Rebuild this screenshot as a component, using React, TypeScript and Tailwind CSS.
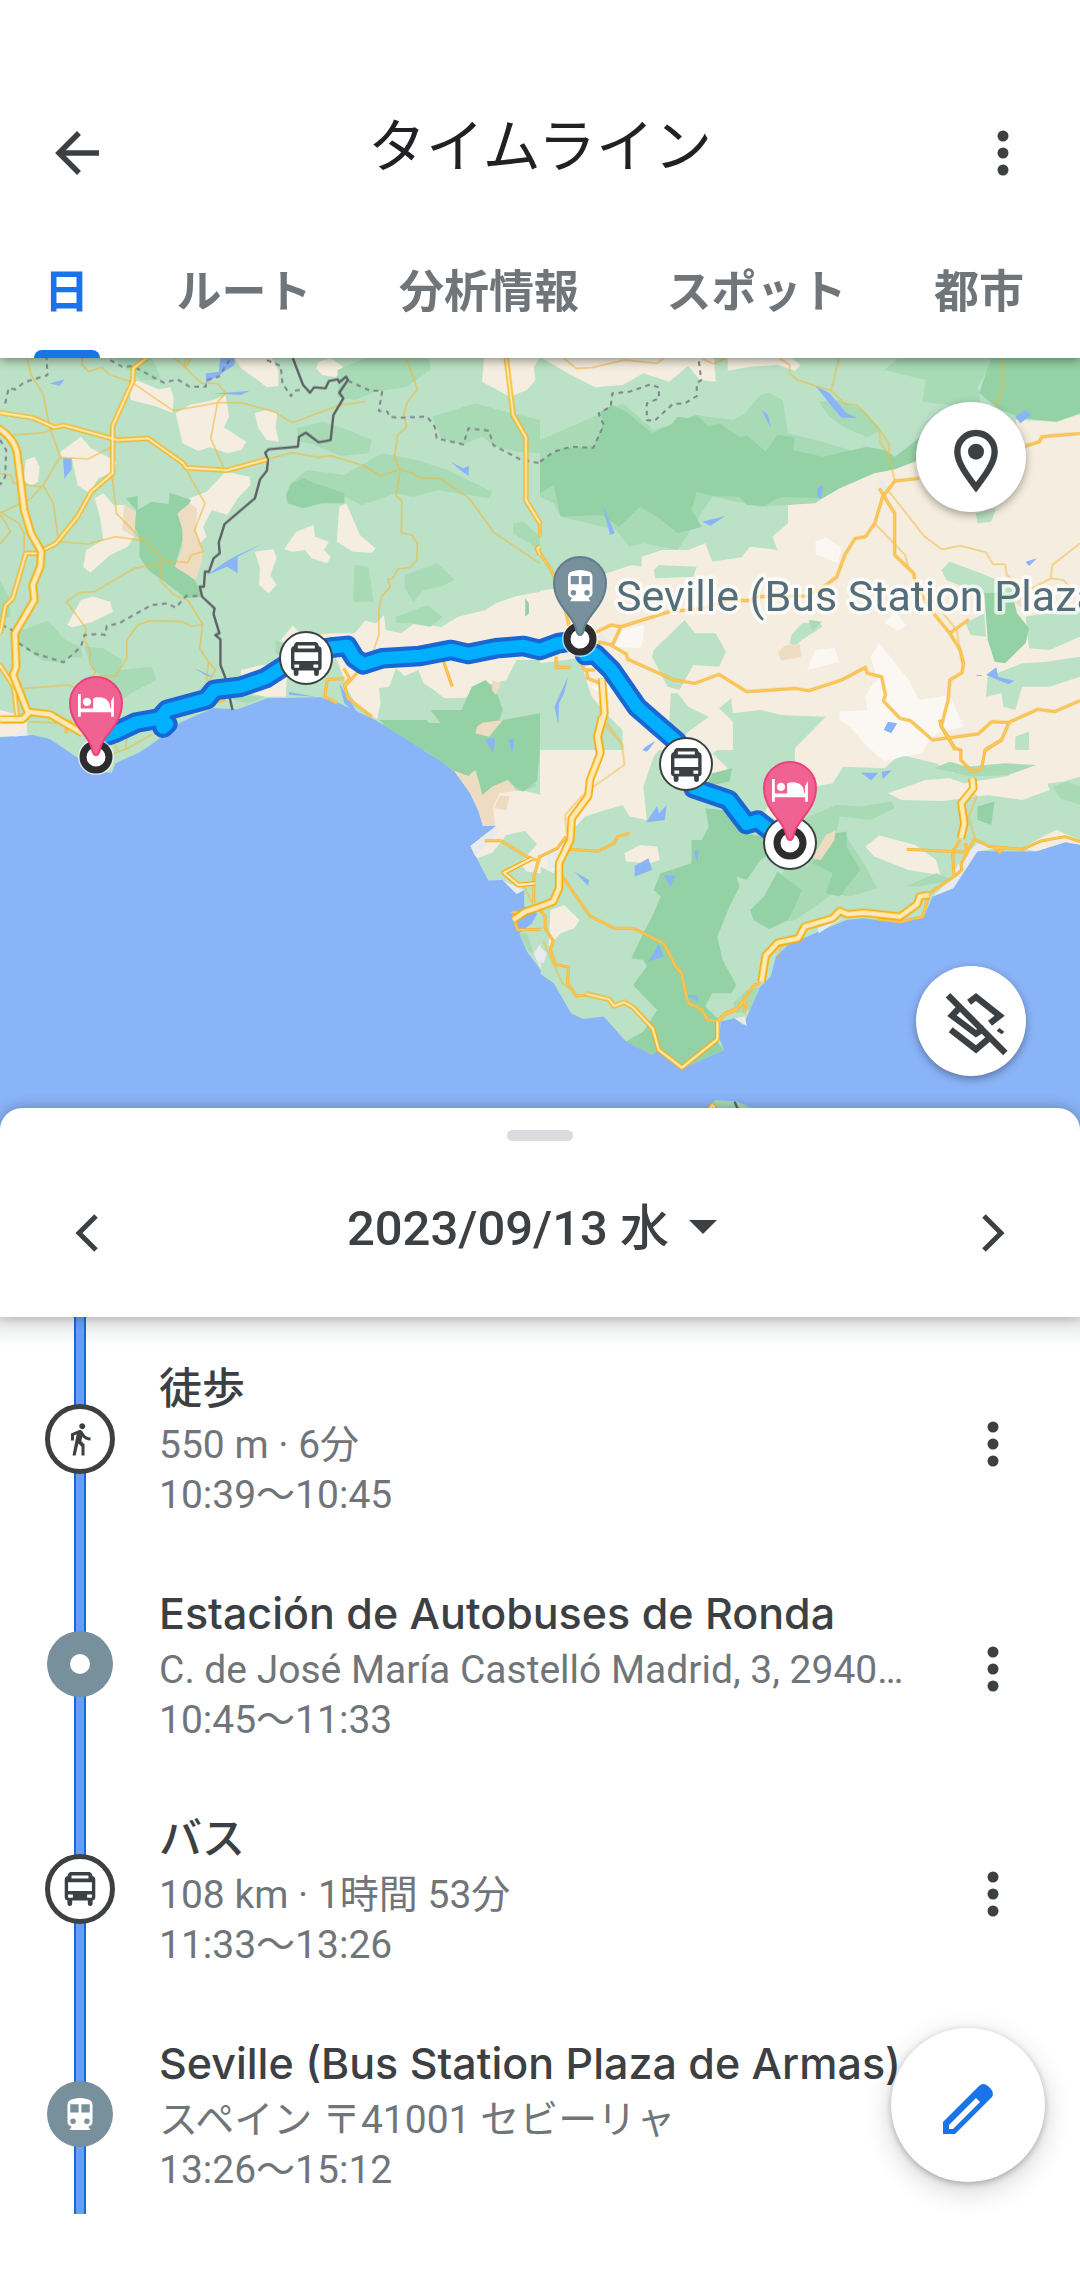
import React from 'react'
import { MdDirectionsWalk } from 'react-icons/md'

type Tiles = { tl?: string; tr?: string; bl?: string; br?: string }

const tileOrigin: Record<keyof Tiles, string> = {
  tl: 'translate(0 0)',
  tr: 'translate(1568 0)',
  bl: 'translate(0 1110)',
  br: 'translate(1568 1110)',
}

const sand: Tiles = {
  tl: 'M680 24H790L808 60V108L775 112 735 80 700 55ZM925 35L960 24 995 50 975 82 935 75 918 55ZM1405 24H1568L1550 50 1555 90 1530 120 1480 140 1440 118 1400 95ZM370 105L400 92 460 118 495 112 505 145 500 188 450 168 380 150ZM510 190L550 165 620 150 655 135 665 200 650 232 715 275 700 300 660 310 610 292 575 302 530 280ZM740 190L770 180 805 190 800 235 810 275 775 270 750 235ZM175 305L235 260 265 295 320 325 338 335 330 365 285 385 260 430 225 405 210 330 180 325ZM75 330L100 320 115 350 110 395 90 408 68 390ZM550 445L600 425 655 365 725 380 728 405 690 445 660 495 615 480 590 530 600 560 570 590ZM275 445L300 430 330 465 365 465 360 540 390 560 370 590 320 615 262 668 242 650 250 600 300 570 290 500ZM985 470L1005 460 1045 555 1090 595 1080 608 1025 605 978 575ZM825 598L860 545 910 525 915 560 955 575 940 600 960 620 950 640 905 625 885 600 850 605ZM740 605L795 598 803 625 785 675 803 705 780 730 752 705 755 655ZM195 825L235 750 270 740 320 755 328 785 270 815 210 832ZM0 1080L55 1095 78 1120V1160H0ZM700 960L760 945 840 940 830 1040 770 1040 700 1025ZM800 890L850 826 880 860 960 850 1030 850 1060 812 1092 820 1115 795 1120 840 1165 850 1210 815 1280 832 1330 800 1410 780 1440 760 1500 738 1570 725V930H1500L1470 990 1400 1010 1350 1043 1290 1045 1260 1020 1230 1000 1215 960 1175 978 1150 955 1130 1010 1100 1015 1105 1060 1095 1108 1040 1075 1010 1020 990 960 970 910 860 930Z',
  tr: 'M5 24H505L510 95 465 90 430 48 375 95 300 70 240 105 160 112 90 75ZM545 24H730L757 45 740 62 690 45 610 50 545 62ZM1570 192L1500 215 1380 210 1400 290 1100 330 1030 358 970 370 870 415 820 445 720 465V520L675 560 690 600 610 590 585 622 500 635 480 580 430 600 355 600 295 620V650L265 645 180 675 150 700 0 722V1200H1570Z',
  bl: 'M1320 155L1360 168 1380 150 1392 190 1400 225 1440 200 1475 180 1530 215 1570 225V385L1525 333 1470 345 1430 398 1384 415 1366 378 1440 318ZM1408 50L1450 15 1480 0 1520 0 1490 55ZM1510 430L1570 360V460L1530 455Z',
  br: 'M0 0H190L240 60 320 0 360 70 330 110 300 200 310 300 260 290 240 255 190 270 130 290 70 360 40 460 0 440ZM360 0H560L555 65 500 100 545 145 480 200 440 210 380 120ZM740 55L830 5 1568 0V170L1520 185 1400 200 1360 165 1280 150 1200 160 1150 130 1070 110 1050 100 1000 145 880 140 850 190 740 210ZM1010 220L1120 180 1190 175 1230 190 1380 165 1470 180 1480 210 1400 240 1300 225 1170 243 1050 240ZM810 300L840 290 858 310 840 340 810 380ZM945 380L985 347 1090 375 1150 420 1162 465 1070 450 970 410ZM1460 350L1500 330 1568 360V380L1445 395 1400 385ZM245 400L290 375 340 380 348 420 320 430 250 425ZM30 570L70 555 115 600 100 625 60 640 25 680ZM650 280L680 230 740 330Z',
}

const greenMid: Tiles = {
  tl: 'M330 24H440L470 90 410 90ZM980 60L1060 24H1245L1250 60 1180 110 1090 125 1030 150 980 140ZM860 235L940 215 1010 240 1080 270 1070 310 990 318 900 280 870 275ZM1255 200L1380 160 1450 180 1568 210V310L1500 305 1440 290 1400 260 1340 285 1280 265ZM850 395L890 360 1000 375 1110 310 1210 330 1300 360 1430 425 1420 445 1270 420 1200 440 1150 430 1050 465 1000 440ZM1030 645L1070 650 1085 755 1025 755ZM1175 675L1270 640 1320 690 1280 710 1230 720 1200 755 1175 715ZM1150 800L1240 765 1285 800 1250 830 1190 820 1150 820ZM40 850L140 812 190 870 235 890 240 925 200 920 180 940 120 930 85 900 45 880ZM245 890L300 895 355 930 350 960 440 950 455 990 380 1030 340 1060 330 1000 270 960ZM1490 520L1520 515 1568 560V600L1490 550ZM0 690L25 740 30 800 0 805ZM800 870L830 880V920L800 910ZM670 1035L770 1040 720 1060 680 1050Z',
  tr: 'M0 270L180 190 240 160 330 240 455 195 560 210 590 195 640 135 665 128 705 150 720 250 800 270 900 300 1000 300 1010 360 900 380 800 460 640 470 500 440 400 600 300 580 260 590 220 540 60 500 40 460 0 440ZM810 155L870 150 940 180 990 240 950 262 880 230 840 200ZM1000 60L1040 24H1320L1270 110 1280 160 1230 170 1110 155 1120 90ZM780 810L820 815 790 840Z',
  bl: 'M1340 30L1370 0H1568V110L1555 200 1520 215 1440 200 1400 225 1300 130 1200 30ZM1507 640L1530 640 1550 700 1535 695Z',
  br: 'M760 300L860 255 930 260 1020 245 1030 265 960 300 870 290 860 340 890 350 940 430 980 505 900 530 850 520 800 560 740 600 680 610 620 580 720 440 780 440ZM1060 500L1150 460 1200 480 1100 500ZM1145 145L1190 125 1240 140 1350 130 1440 135 1360 165 1250 170ZM1490 200L1530 185 1568 200V255L1510 235ZM560 850L600 810 640 800 610 870 570 880Z',
}

const greenDark: Tiles = {
  tl: 'M365 445L400 438V480L440 455 490 462 492 428 555 450 530 500 530 570 510 640 565 690 590 740 540 745 470 690 430 660 405 620 405 560 390 530 395 480ZM845 400L880 385 915 400 1000 430 1000 460 935 460 880 475 835 460 830 435ZM1370 1010L1410 990 1440 1020 1460 1080 1450 1110 1390 1120 1370 1165 1410 1180 1400 1200H1220L1100 1140 1120 1110 1180 1115 1280 1120 1250 1080 1340 1080ZM1525 745L1536 760V790L1525 800Z',
  tr: 'M0 335L60 295 155 290 185 220 175 185 210 165 250 185 325 250 380 225 400 200 430 205 455 195 490 230 520 220 580 262 600 255 655 305 690 255 740 262 735 300 820 320 950 290 1000 300 1030 320 1100 265V330L1030 358 970 370 870 415 820 445 700 440 650 468 600 465 580 440 500 438 455 425 440 480 470 530 400 550 340 500 290 470 230 530 180 495 60 500 40 405 0 430ZM1310 24H1568V190L1500 215 1400 205 1330 175 1275 130ZM1290 730L1370 725 1385 790 1420 835 1410 880 1350 940 1320 935 1300 870Z',
  bl: 'M1100 0H1240L1260 40 1320 20 1400 0 1460 0 1568 -20V60L1560 180 1520 215 1470 180 1400 225 1380 150 1360 168 1320 155 1275 120Z',
  br: 'M480 265L530 270 590 340 650 350 700 380 640 420 600 480 570 470 580 500 550 560 515 650 530 720 570 795 555 820 500 820 480 860 520 900 510 960 535 990 410 1047 345 990 325 1005 250 965 300 935 340 870 270 795 310 740 300 720 265 715 300 640 330 580 350 530 330 510 350 460 440 430 440 360 470 360 490 320ZM610 570L650 530 690 455 720 480 760 510 740 560 720 600 665 628 620 600ZM860 340L890 335 890 380 930 450 900 490 870 530 830 520 850 460 790 430ZM1270 260L1320 245 1310 315 1270 300ZM500 160L558 145 550 185 480 200Z',
}

const greenOnSand: Tiles = {
  tl: 'M835 940L960 930 1000 985 990 1045 940 1035 890 1035 830 1040Z',
  tr: 'M0 940L110 925 125 960 150 1040 200 1100 240 1140 240 1200H0ZM330 900L420 810 450 850 510 850 540 905 520 950 445 945 405 1020 370 1010 325 920ZM380 1030H400L430 1070 490 1100 425 1150 400 1200H370ZM520 1075L555 1045 560 1090 640 1080 700 1095 830 1100 740 1195V1200H560V1115ZM330 660L345 645 455 650 445 680 335 685ZM730 855L760 820 810 815 820 830 760 870 740 890 725 880ZM1265 490L1325 475 1310 515 1270 520ZM1165 660L1190 635 1280 670 1350 700 1390 730 1370 760 1250 720 1180 690ZM1235 820L1290 790 1295 860 1250 855ZM1410 800L1568 770V860L1480 900 1420 895ZM1300 980L1400 940 1470 935 1568 920V980L1480 1010 1400 1010 1380 1080 1345 1070 1340 1030 1295 1040ZM1380 1160L1420 1145V1200H1380Z',
}

const pale: Tiles = {
  tr: 'M800 575L830 562 875 595 865 640 800 612ZM215 890L240 840 300 825 300 870 290 895ZM1000 820L1030 780 1062 825 1040 842ZM775 960L800 900 855 893 868 935ZM870 1085L950 1080 945 1040 960 1010 980 990 960 920 985 880 1070 990 1100 1050 1190 1035 1230 1130 1150 1150 1110 1200H960L900 1130 870 1110ZM150 1010L200 1000 240 1030 165 1025Z',
  br: 'M900 0H1230L1200 20 1140 30 1110 100 1050 110 1000 125 940 70Z',
}

const grey: Tiles = {
  tl: 'M40 1160L65 1135 85 1155Z',
  tr: 'M980 375L1015 415 995 430ZM170 845L200 870 175 880Z',
  bl: 'M1366 378L1440 318 1445 340 1380 410ZM1460 482L1522 510 1500 522ZM1550 700L1570 670V750Z',
  br: 'M0 680L20 700 10 730 0 725ZM20 390L60 400 50 440 20 450ZM565 895L595 890 600 918ZM1270 370L1320 385 1270 395 1200 505 1140 530 1190 480 1220 420ZM805 625L880 595 850 612 810 640Z',
}

const dune: Tiles = {
  tl: 'M360 465L395 485 390 558 355 540ZM515 490L550 460 572 475 570 540 590 600 585 640 568 690 508 650 530 590 530 540ZM1430 990L1455 1000 1440 1035 1428 1020ZM1385 1130L1400 1118 1460 1110 1420 1160 1380 1150Z',
  tr: 'M690 905L715 885 755 882 758 920 700 932ZM1375 755L1400 745V775Z',
  bl: 'M1320 152L1360 168 1380 150 1392 190 1400 225 1430 200 1475 180 1500 212 1450 220 1432 260 1437 318H1402L1390 275 1365 220ZM1450 228L1480 228 1470 272 1435 265Z',
  br: 'M830 345L858 332 855 360 815 420 790 415Z',
}

const water: Tiles = {
  tl: 'M145 100L188 88 172 108ZM598 70L635 66 640 24H682L680 45 630 80 598 100ZM615 130L660 128 725 122 700 135ZM183 325H208V358L187 386ZM1308 335L1345 355 1362 348 1360 378 1330 355ZM600 676L655 635 690 615 765 580 690 620 690 670 660 650ZM565 955L620 980 600 978ZM838 1025L915 1040 840 1035ZM985 1000L1045 1100 1000 1060ZM1408 1168L1438 1165 1432 1210ZM1477 1168H1493L1487 1210Z',
  tr: 'M800 108L840 128 890 190 922 203 875 203 840 160ZM642 178L662 195 670 233ZM182 465L217 550 203 555ZM470 515L538 498 495 527ZM805 415L822 405 815 450 805 435ZM1380 200L1410 180 1425 195 1395 220ZM1410 635L1443 625 1420 648ZM1295 975L1325 952 1330 980 1378 992 1360 1003ZM1010 1115L1037 1120 1020 1150 998 1140ZM82 978L70 1030 55 1060 53 1125 42 1070ZM300 1195L335 1172 315 1200ZM1268 975H1283V978H1268Z',
  br: 'M308 308L340 258 345 280 368 256 362 300ZM275 438L315 415 325 450 275 470ZM360 465L393 468 378 500ZM100 455L142 480 140 498ZM448 395L460 390 458 435ZM315 725L345 672 360 710ZM412 825L455 825 462 843ZM932 158L982 158 962 182ZM992 155L1022 150 995 178ZM296 90L333 65 310 95Z',
}

const sea: Tiles = {
  bl: 'M0 52L95 45 145 57 225 113 270 155 325 158 335 130 400 100 430 80 470 50 520 10 560 -10 620 -35 690 -32 775 -65 930 -68 985 -50 1090 0 1275 120 1320 155 1365 220 1390 275 1402 318H1440L1366 378 1418 482 1460 480 1500 522 1522 510V560L1560 580 1545 610 1507 640 1530 695 1570 750V1260H0Z',
  br: 'M-2 760L40 790 90 880 125 897 185 890 250 965 325 1005 345 990 410 1047 535 990 520 955 525 905 565 895 590 915 610 870 640 800 670 770 685 710 720 675 810 635 890 600 940 595 1050 610 1115 590 1140 530 1200 505 1270 393 1440 395 1525 367 1570 375V1260H-2Z',
}

const africa: Tiles = { br: 'M480 1170L510 1140 570 1145 640 1175Z' }

const minorRoads: Tiles = {
  tl: 'M78 24L90 75 125 130 145 235 175 320 125 405 90 445 0 490M40 255L125 248 155 235M175 322L255 327 325 290M238 24V45L258 65 295 52 320 75 380 95 503 182 632 158 700 158 795 185 848 218 985 165 1060 155M540 24L535 50 585 100 632 100 655 130 632 155 612 265 650 355M505 24L540 50 555 24M125 405L155 460 170 575 255 582 335 560 415 572M325 375L338 490 415 572 480 632 465 640 390 655 275 725 230 728 193 755 250 835 245 870 262 905 260 940 278 965 260 995M465 640V692L505 735 545 750 588 822 580 895 605 935 600 985 620 1020M540 358L595 460 565 540 590 605 555 615 545 638 480 632M588 825L555 828 530 815 435 812 400 825 368 870V925L335 978 280 978M605 935L625 960 600 1010M775 328L848 308 925 322 960 317 1060 348 1105 378 1160 358 1200 370 1215 382 1280 387 1362 445 1435 548 1568 640M1180 24L1212 118 1183 155 1172 195 1180 230 1155 255 1145 320 1162 360 1150 435 1167 455 1165 548 1195 555 1212 580 1210 630 1192 652 1155 657 1140 685 1125 688 1133 710 1108 740 1100 780V855L1085 900M0 370L30 375 40 400 120 410M0 485L55 520 70 550V605M0 582L30 545 15 515 0 495M70 1015L200 1005 225 1015M85 1115L200 1120M0 940L40 1000',
  tr: 'M68 24L105 55 150 53 245 30 340 40 360 24M470 24L503 42 540 24M695 24L725 45V70L748 90 845 122 885 160 920 165 985 238 988 278 1013 315 1030 392M868 24L845 122M985 238L1013 280V315M1340 24L1345 110 1320 170M1010 420L1115 558 1167 598 1220 587 1295 607 1315 643 1350 642 1355 675 1400 712 1430 715 1483 685 1520 690 1550 725M1483 685L1487 645 1568 580M972 520L1060 615 1070 655M1090 690L1210 840 1225 940M185 1120L240 1185V1200',
  bl: 'M330 100L365 88 445 42M370 30L365 88M330 70L345 98M1522 500L1545 550',
  br: 'M195 10L238 72 245 135 155 200 120 230 73 285 78 340M10 665L65 790 100 815M1250 220L1268 230 1245 290 1262 355M690 720L700 680 760 655',
}

const mainRoads: Tiles = {
  tl: 'M1288 935L1313 1010M1000 985L950 988 943 1040 978 1060M1000 1010L1040 965M998 955L1015 985 1000 1005 1010 1045 1080 1100M190 1150L205 1110M570 1050L600 1060 655 1050',
  tr: 'M0 610L30 655 60 720 85 830M0 515V560M160 848L205 825 235 830 375 785 470 775 550 750 605 752 630 740 780 738 830 705 862 680 885 615 915 565 945 560 972 520 995 440 1030 393 1100 385M1410 288L1450 275 1457 260 1568 250M985 415L1030 490V615L1085 670 1090 700 1135 780 1190 850 1245 808M1190 850L1220 900 1230 940 1225 968 1190 990 1185 1050 1165 1130 1187 1165 1205 1200M165 875L210 885 235 830M205 885L250 912 255 928 390 990 450 1000 520 973 600 1025 740 1015 780 1022 875 990 945 952 950 970 992 980 1003 1035 997 1053 1045 1105 1075 1112 1140 1170 1272 1152 1312 1115 1362 1117 1445 1078 1495 1085 1568 1052M1362 1117L1340 1170 1290 1200M47 920V952H88M120 940L130 960H160M135 960L138 985 175 1000',
  bl: 'M1408 362H1455L1530 410 1568 425M1568 405L1550 470V550M1485 577H1520M1495 605L1503 630 1570 628',
  br: 'M0 410L50 385 75 350M78 388L170 393 215 370 225 350 260 340M65 470L145 588 215 625 272 625 360 672 395 742 410 757 430 850 468 868 487 900 515 903 540 878 570 865 597 845M520 903L535 885 570 870 622 795 640 790M597 845L593 880M1065 388L1240 397 1262 357 1305 380 1400 388 1455 363 1525 350 1568 365M1220 360L1198 395 1202 470 1130 520 1112 590 1045 605 980 598M1235 370L1240 400 1222 430 1225 450 1202 470M1320 385L1345 385 1335 397ZM0 570L15 590V625L38 662 30 690 45 733 83 742 80 790 105 828 140 825M1160 0L1165 20 1187 55 1205 85 1222 90V120L1255 155 1282 145 1292 92 1340 60',
}

const highways: Tiles = {
  tl: 'M0 188L95 203 158 232 185 226 342 270 430 265 532 340 540 353 658 361 775 328M425 24L387 55 385 95 327 228V370L265 425 225 500 163 580 120 603M118 610H75L37 745 15 768 5 830 0 850M1470 24L1490 195 1527 262V450L1568 520M1568 590L1560 595 1568 615M0 945L40 1010 50 1100',
  bl: 'M1545 415L1463 458 1505 495 1553 490',
  br: 'M135 822L200 838 215 858 245 847 270 862 327 925 345 990 412 1043 515 958V905M490 1172L500 1155 512 1170',
}

const motorways: Tiles = {
  tl: 'M-10 232Q40 260 50 310L70 480 90 550 120 605 117 650 95 705 100 750 43 850 47 950 38 975 80 1085 145 1093 240 1150M0 1108H65L85 1088',
  tr: 'M180 985L187 1090 167 1160 175 1210',
  bl: 'M1490 600L1525 575 1568 560',
  br: 'M180 -10L167 50 175 100 145 180 140 228 92 295 88 360 55 430V505L38 545 0 560M643 785L655 707 690 668 750 655 768 620 850 595 870 573 893 583 940 578 1045 590 1095 553 1102 530 1130 525M1255 175L1258 205 1223 250 1232 310 1222 355',
}

const border: Tiles = {
  tl: 'M850 24L880 105 900 128 912 112 945 115 955 93 980 88 985 97 1005 80 1010 90 985 128 997 145 968 195 960 270 925 277 888 248 868 260 865 290 780 298 770 308 778 330 775 362 755 388 740 445 652 522 635 578 638 610 620 625 607 665H595L592 710H580L587 740 623 775 620 792 637 850 625 855 640 868V945L653 980 675 1080',
  br: 'M565 1145L575 1170',
}

const regions: Tiles = {
  tl: 'M15 160L25 115 45 118 70 97 138 75 135 24M320 30L355 50 385 48 475 98 515 88 550 110 597 110 600 90 635 80 670 24M775 30L815 48 820 100 845 138 855 122 880 118M1010 92L1075 122H1110L1100 183 1125 185 1130 200 1155 203 1240 200 1262 230 1268 265 1345 283 1360 235 1420 242 1432 285 1510 328 1568 340M0 270L18 300 15 380 0 405M5 825L35 840 40 870 100 910 185 937 235 890 245 855 290 852 305 855 310 828 345 820 440 765 485 760 510 773 540 738H580',
  tr: 'M0 335L40 305 90 290 155 293 185 225 170 190 205 170 210 130 260 125 320 103 345 112V145L310 160V210L332 213 385 162 420 160 455 138V100L468 90 460 24',
}

type Paint = { fill?: string; stroke?: string; width?: number; opacity?: number; dash?: string }

function Layer({ tiles, fill = 'none', stroke, width, opacity, dash }: Paint & { tiles: Tiles }) {
  return (
    <g
      fill={fill}
      stroke={stroke}
      strokeWidth={width}
      opacity={opacity}
      strokeDasharray={dash}
      strokeLinejoin="round"
    >
      {(Object.keys(tiles) as (keyof Tiles)[]).map((key) => (
        <path key={key} d={tiles[key]} transform={tileOrigin[key]} />
      ))}
    </g>
  )
}

const busPath =
  'M16 0H74Q80 3 82 12 90 14 90 22V76Q90 83 82 84V94Q82 100 75 100T68 94V84H22V94Q22 100 15 100T8 94V84Q0 83 0 76V22Q0 14 8 12 10 3 16 0ZM10 30V56H80V30ZM20 10V19H70V10ZM10 66V76H24V66ZM66 66V76H80V66Z'
const trainPath =
  'M20 2Q36 -2 52 2 72 4 72 20V68Q72 78 60 82L66 92H6L12 82Q0 78 0 68V20Q0 4 20 2ZM8 18V42H32V18ZM40 18V42H64V18ZM16 59A8 8 0 1 0 16 75 8 8 0 1 0 16 59ZM56 59A8 8 0 1 0 56 75 8 8 0 1 0 56 59Z'
const bedPath =
  'M0 0H8V42H96V20L104 6V66H96V53H8V66H0ZM44 42V13Q58 6 80 14 92 22 94 42ZM26 11A12 12 0 1 1 26 35 12 12 0 1 1 26 11Z'

const route =
  'M300 1160L330 1150 395 1118 460 1106 485 1122 473 1133 466 1103 485 1080 600 1048 622 1020 700 1010 770 985 890 905 960 893 1008 888 1030 925 1055 943 1110 925 1220 918 1310 900 1360 912 1440 895 1520 888 1568 900 1620 880 1685 870 1700 915 1728 912 1775 960 1850 1072 1965 1175 1990 1245 2015 1315 2115 1350 2168 1422 2200 1412 2240 1445'

function Stop({ x, y }: { x: number; y: number }) {
  return (
    <>
      <circle cx={x} cy={y} r="18" fill="#fff" opacity="0.6" />
      <circle cx={x} cy={y} r="13" fill="#fff" stroke="#2d2d2d" strokeWidth="7" />
    </>
  )
}

function Pin({ x, y, fill, stroke, children }: { x: number; y: number; fill: string; stroke: string; children: React.ReactNode }) {
  return (
    <g transform={`translate(${x} ${y})`}>
      <path
        d="M0 52Q-3 52 -4 46C-6 33 -26 22 -26 0A26 26 0 0 1 26 0C26 22 6 33 4 46Q3 52 0 52Z"
        fill={fill}
        stroke={stroke}
        strokeWidth="2"
      />
      {children}
    </g>
  )
}

function BusMarker({ x, y }: { x: number; y: number }) {
  return (
    <g transform={`translate(${x} ${y})`}>
      <circle r="26" fill="#fff" stroke="#3c4043" strokeWidth="2" />
      <path d={busPath} fill="#3c4043" transform="translate(-15 -16) scale(.34)" fillRule="evenodd" />
    </g>
  )
}

function TimelineMap() {
  return (
    <svg viewBox="0 0 1080 772" className="block h-auto w-full bg-[#bbe2c6]" role="img" aria-label="地図">
      <g transform="scale(.3444 .3333) translate(0 -24)">
        <Layer tiles={sand} fill="#f5eee0" />
        <Layer tiles={greenOnSand} fill="#bbe2c6" />
        <Layer tiles={greenMid} fill="#a8dab5" />
        <Layer tiles={greenDark} fill="#94d2a5" />
        <Layer tiles={pale} fill="#fbf8f3" />
        <Layer tiles={sea} fill="#8ab4f8" />
        <Layer tiles={grey} fill="#e8eaed" />
        <Layer tiles={dune} fill="#eedcc2" />
        <Layer tiles={water} fill="#8ab4f8" />
        <Layer tiles={africa} fill="#a8dab5" />
        <Layer tiles={minorRoads} stroke="#f2b83c" width={5} opacity={0.6} />
        <Layer tiles={regions} stroke="#80868b" width={6} dash="14 13" />
        <Layer tiles={border} stroke="#5f6368" width={7} />
        <Layer tiles={mainRoads} stroke="#f5b63b" width={9} />
        <Layer tiles={mainRoads} stroke="#fccb5c" width={4} />
        <Layer tiles={highways} stroke="#f9ab00" width={14} />
        <Layer tiles={highways} stroke="#ffeab5" width={7} />
        <Layer tiles={motorways} stroke="#f9ab00" width={24} />
        <Layer tiles={motorways} stroke="#ffeab5" width={14} />
        <g fill="none" strokeLinejoin="round" strokeLinecap="round">
          <path d={route} stroke="#1967d2" strokeWidth="62" />
          <path d={route} stroke="#00b0ff" strokeWidth="37" />
        </g>
      </g>

      <BusMarker x={306} y={300} />
      <BusMarker x={686} y={406} />
      <circle cx="790" cy="485" r="26" fill="#fff" stroke="#3c4043" strokeWidth="2" />
      <Stop x={96} y={399} />
      <Stop x={580} y={281} />
      <Stop x={790} y={485} />
      <Pin x={96} y={345} fill="#f06292" stroke="#ec407a">
        <path d={bedPath} fill="#fff" transform="translate(-18 -9) scale(.345)" />
      </Pin>
      <Pin x={790} y={430} fill="#f06292" stroke="#ec407a">
        <path d={bedPath} fill="#fff" transform="translate(-18 -9) scale(.345)" />
      </Pin>
      <Pin x={580} y={225} fill="#78909c" stroke="#607d8b">
        <path d={trainPath} fill="#fff" fillRule="evenodd" transform="translate(-12 -13) scale(.34)" />
      </Pin>
      <text
        x="616"
        y="253"
        className="text-[43px] [font-family:Roboto,sans-serif]"
        fill="#546e7a"
        stroke="#fff"
        strokeOpacity="0.7"
        strokeWidth="7"
        strokeLinejoin="round"
        paintOrder="stroke"
      >
        Seville (Bus Station Plaza de Armas)
      </text>
    </svg>
  )
}

function Dots() {
  return (
    <svg viewBox="0 0 12 46" className="h-[46px] w-3" fill="#3c4043" aria-hidden="true">
      <circle cx="6" cy="6" r="5.5" />
      <circle cx="6" cy="23" r="5.5" />
      <circle cx="6" cy="40" r="5.5" />
    </svg>
  )
}

const tabs = ['日', 'ルート', '分析情報', 'スポット', '都市']

const visits = [
  { kind: 'walk', title: '徒歩', detail: '550 m · 6分', time: '10:39～10:45' },
  {
    kind: 'place',
    title: 'Estación de Autobuses de Ronda',
    detail: 'C. de José María Castelló Madrid, 3, 29400 Ronda',
    time: '10:45～11:33',
  },
  { kind: 'bus', title: 'バス', detail: '108 km · 1時間 53分', time: '11:33～13:26' },
  {
    kind: 'train',
    title: 'Seville (Bus Station Plaza de Armas)',
    detail: 'スペイン 〒41001 セビーリャ',
    time: '13:26～15:12',
  },
]

function VisitIcon({ kind }: { kind: string }) {
  if (kind === 'walk' || kind === 'bus') {
    return (
      <span className="flex size-[70px] items-center justify-center rounded-full border-5 border-[#3c4043] bg-white text-[#3c4043]">
        {kind === 'walk' ? (
          <MdDirectionsWalk className="size-9" />
        ) : (
          <svg viewBox="0 0 90 100" className="h-[34px] w-8" fill="currentColor" fillRule="evenodd">
            <path d={busPath} />
          </svg>
        )}
      </span>
    )
  }
  return (
    <span className="flex size-[66px] items-center justify-center rounded-full bg-[#78909c]">
      {kind === 'place' ? (
        <span className="size-5 rounded-full bg-white" />
      ) : (
        <svg viewBox="0 0 72 92" className="h-8 w-[26px]" fill="#fff" fillRule="evenodd">
          <path d={trainPath} />
        </svg>
      )}
    </span>
  )
}

export default function App() {
  return (
    <div className="min-h-screen bg-white text-[#3c4043] [font-family:Roboto,'Noto_Sans_CJK_JP',sans-serif]">
      <header className="relative z-10 bg-white shadow-[0_2px_10px_rgba(0,0,0,0.45)]">
        <div className="flex items-center justify-between px-[53px] pt-[106px]">
          <button aria-label="戻る" className="flex h-[94px] w-12 items-center">
            <svg viewBox="0 0 48 46" className="h-[46px] w-12" fill="none" stroke="#3c4043" strokeWidth="5.5">
              <path d="M46 23H6M26 3L6 23 26 43" />
            </svg>
          </button>
          <h1 className="pb-3 text-[58px] leading-[78px] text-[#202124]">タイムライン</h1>
          <button aria-label="その他" className="flex h-[94px] w-12 items-center justify-center">
            <Dots />
          </button>
        </div>
        <nav className="flex justify-between pt-14 pr-14 pl-11 text-[45px] leading-[74px] font-bold">
          {tabs.map((tab, i) => (
            <a
              key={tab}
              href="#"
              className={i === 0 ? 'flex flex-col items-center text-[#1a73e8]' : 'pb-7 text-[#70757a]'}
            >
              {tab}
              {i === 0 && <span className="-mx-3 mt-5 h-2 w-[66px] rounded-t-lg bg-[#1a73e8]" />}
            </a>
          ))}
        </nav>
      </header>

      <section className="relative">
        <TimelineMap />
        <button
          aria-label="場所"
          className="absolute top-11 right-[54px] size-[110px] rounded-full bg-white shadow-[0_3px_8px_rgba(0,0,0,0.35)]"
        >
          <svg viewBox="0 0 330 330" className="size-full">
            <path
              d="M180 256C152 219 124 182 124 149A56 56 0 0 1 236 149C236 182 208 219 180 256Z"
              fill="none"
              stroke="currentColor"
              strokeWidth="19"
            />
            <circle cx="180" cy="149" r="24" fill="currentColor" />
          </svg>
        </button>
        <button
          aria-label="レイヤ"
          className="absolute right-[54px] bottom-[54px] size-[110px] rounded-full bg-white shadow-[0_3px_8px_rgba(0,0,0,0.35)]"
        >
          <svg viewBox="0 0 330 330" className="size-full" fill="none" stroke="currentColor" strokeWidth="19">
            <path d="M96 88L268 261M159 109L180 93 251 149 222 172M127 129L108 149 180 203 206 186M104 191L180 250 220 216" />
            <path d="M242 194L250 186 265 197 257 205Z" fill="currentColor" stroke="none" />
          </svg>
        </button>
      </section>

      <section className="relative z-10 -mt-[22px] rounded-t-[22px] bg-white shadow-[0_0_14px_rgba(0,0,0,0.3)]">
        <div className="flex justify-center pt-[22px]">
          <span className="h-[11px] w-[66px] rounded-full bg-[#dadce0]" />
        </div>
        <div className="flex items-center justify-between px-[74px] pt-[50px] pb-[50px]">
          <button aria-label="前の日">
            <svg viewBox="0 0 26 40" className="mt-2 h-10 w-[26px]" fill="none" stroke="currentColor" strokeWidth="5">
              <path d="M22 3L5 20 22 37" />
            </svg>
          </button>
          <button className="flex items-center gap-5 pr-4 text-[49px] leading-[76px] font-medium">
            2023/09/13 水
            <svg viewBox="0 0 28 14" className="mb-1 h-3.5 w-7" fill="currentColor">
              <path d="M0 0H28L14 14Z" />
            </svg>
          </button>
          <button aria-label="次の日">
            <svg viewBox="0 0 26 40" className="mt-2 h-10 w-[26px]" fill="none" stroke="currentColor" strokeWidth="5">
              <path d="M4 3L21 20 4 37" />
            </svg>
          </button>
        </div>
      </section>

      <main className="relative bg-linear-to-b from-[#e4e7e6] to-white to-[30px] pb-16">
        <div className="relative pt-2">
          <div className="absolute inset-y-0 left-[74px] w-3 border-x-2 border-[#1967d2] bg-[#669df6]" />
          <ul>
            {visits.map((visit) => (
              <li key={visit.time} className="flex h-[225px] last:h-[214px]">
                <div className="relative flex h-[228px] w-[159px] shrink-0 items-center justify-center">
                  <VisitIcon kind={visit.kind} />
                </div>
                <div className="min-w-0 flex-1 pt-8 text-[39px] leading-[50px] text-[#70757a]">
                  <h2 className="truncate text-[43px] leading-[63px] font-medium text-[#3c4043] [font-family:Inter,'Noto_Sans_CJK_JP',sans-serif]">
                    {visit.title}
                  </h2>
                  <p className="truncate">{visit.detail}</p>
                  <p>{visit.time}</p>
                </div>
                <button aria-label="メニュー" className="mr-11 ml-8 flex h-[238px] w-[86px] items-center justify-center">
                  <Dots />
                </button>
              </li>
            ))}
          </ul>
        </div>
        <button
          aria-label="編集"
          className="absolute right-[35px] bottom-24 flex size-[154px] items-center justify-center rounded-full bg-white pt-2 shadow-[0_8px_28px_rgba(0,0,0,0.18),0_2px_6px_rgba(0,0,0,0.25)]"
        >
          <svg viewBox="0 0 50 50" className="size-[50px]" fill="#1a73e8" fillRule="evenodd">
            <path d="M0 50V38L36 2Q40 -2 45 2 52 8 49 13L12 50ZM6 45H10L37 18 33 14 6 41Z" />
          </svg>
        </button>
      </main>
    </div>
  )
}
